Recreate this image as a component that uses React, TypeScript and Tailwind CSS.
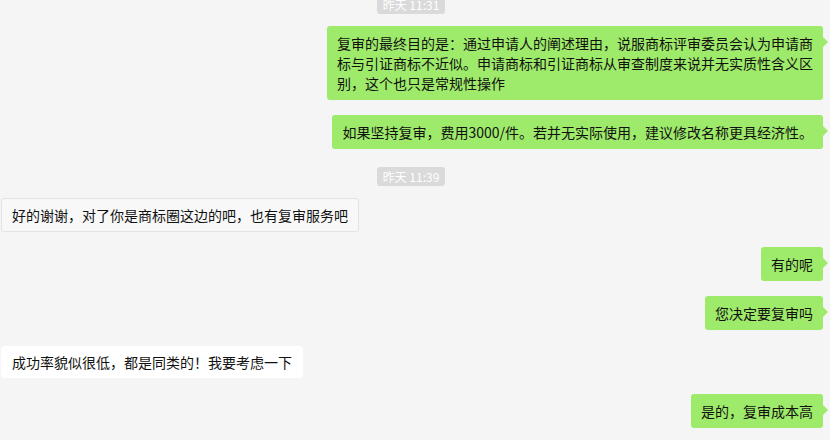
import React from "react";

type Msg =
  | { kind: "time"; text: string; mt: string }
  | { kind: "me" | "them"; text: string; mt: string; hover?: boolean };

const messages: Msg[] = [
  { kind: "time", text: "昨天 11:31", mt: "-mt-[5px]" },
  {
    kind: "me",
    mt: "mt-[12px]",
    text: "复审的最终目的是：通过申请人的阐述理由，说服商标评审委员会认为申请商标与引证商标不近似。申请商标和引证商标从审查制度来说并无实质性含义区别，这个也只是常规性操作",
  },
  { kind: "me", mt: "mt-[15px]", text: "如果坚持复审，费用3000/件。若并无实际使用，建议修改名称更具经济性。" },
  { kind: "time", text: "昨天 11:39", mt: "mt-[18px]" },
  { kind: "them", mt: "mt-[12px]", hover: true, text: "好的谢谢，对了你是商标圈这边的吧，也有复审服务吧" },
  { kind: "me", mt: "mt-[15px]", text: "有的呢" },
  { kind: "me", mt: "mt-[15px]", text: "您决定要复审吗" },
  { kind: "them", mt: "mt-[16px]", text: "成功率貌似很低，都是同类的！我要考虑一下" },
  { kind: "me", mt: "mt-[16px]", text: "是的，复审成本高" },
];

function TimeChip({ text, mt }: { text: string; mt: string }) {
  return (
    <div className={`flex justify-center pr-[8px] ${mt}`}>
      <span className="rounded-[3px] bg-[#dadada] px-[6px] text-[12px] leading-[19px] text-white">
        {text}
      </span>
    </div>
  );
}

function Bubble({ msg }: { msg: Extract<Msg, { kind: "me" | "them" }> }) {
  if (msg.kind === "me") {
    return (
      <div className={`flex justify-end pr-[7px] ${msg.mt}`}>
        <div className="relative max-w-[496px] rounded-[3px] bg-[#9eea6a] px-[10px] py-[7px] text-[14px] leading-[20px] text-[#111]">
          {msg.text}
          {/* tail */}
          <span className="absolute right-[-5px] top-[11px] h-0 w-0 border-y-[5px] border-l-[5px] border-y-transparent border-l-[#9eea6a]" />
        </div>
      </div>
    );
  }
  return (
    <div className={`flex justify-start pl-[1px] ${msg.mt}`}>
      <div
        className={`max-w-[496px] rounded-[3px] px-[10px] text-[14px] leading-[20px] text-[#111] ${
          msg.hover ? "border border-[#e3e3e3] bg-[#f8f8f8] py-[6px]" : "border border-white bg-white py-[5px]"
        }`}
      >
        {msg.text}
      </div>
    </div>
  );
}

export default function App() {
  return (
    <div
      className="h-[440px] w-[830px] overflow-hidden bg-[#f5f5f5]"
      style={{ fontFamily: '"Microsoft YaHei", "Noto Sans CJK SC", sans-serif' }}
    >
      <div className="flex flex-col">
        {messages.map((m, i) =>
          m.kind === "time" ? <TimeChip key={i} text={m.text} mt={m.mt} /> : <Bubble key={i} msg={m} />
        )}
      </div>
    </div>
  );
}
